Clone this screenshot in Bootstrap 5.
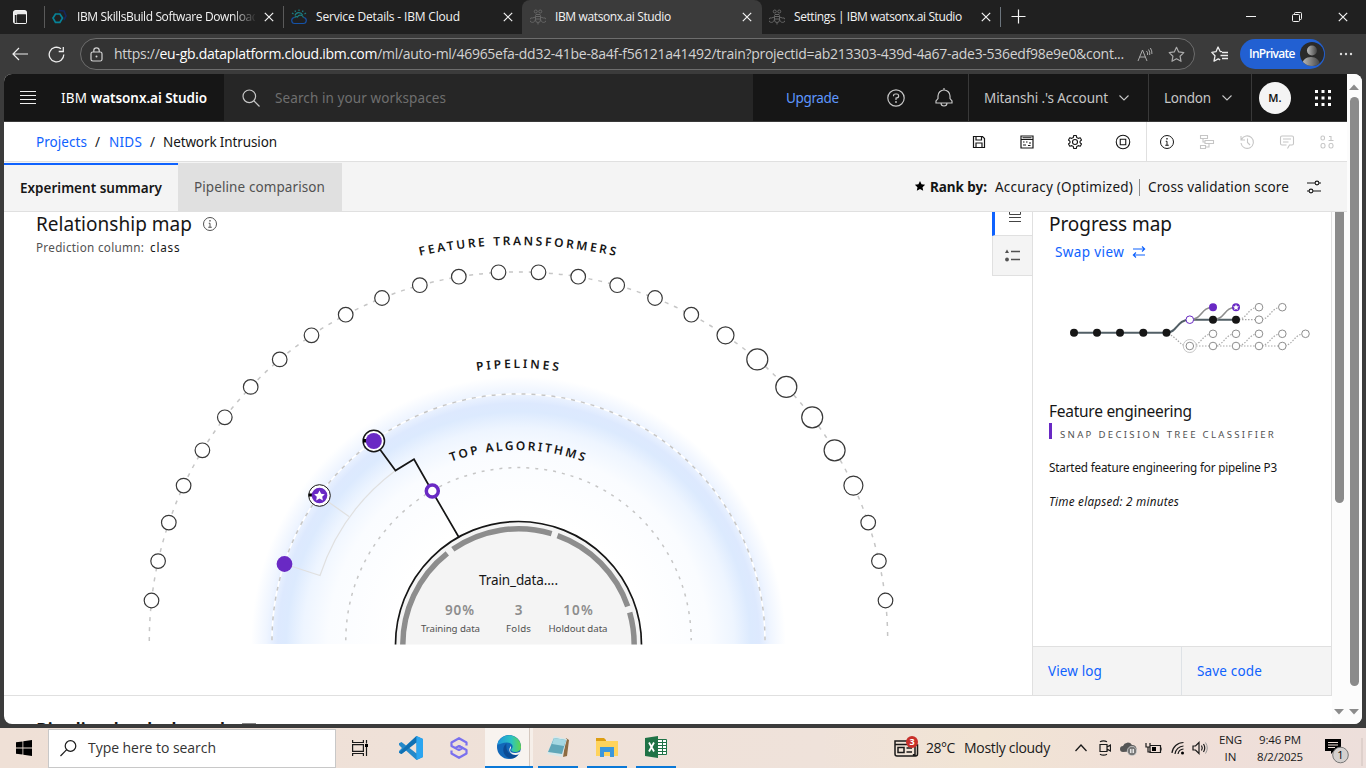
<!DOCTYPE html>
<html lang="en">
<head>
<meta charset="utf-8">
<title>IBM watsonx.ai Studio</title>
<meta name="viewport" content="width=device-width, initial-scale=1">
<link href="https://cdn.jsdelivr.net/npm/bootstrap@5.3.0/dist/css/bootstrap.min.css" rel="stylesheet">
<style>
:root{--blue:#0f62fe;--ink:#161616;--line:#e0e0e0;--soft:#f4f4f4;--purple:#6929c4}
html,body{height:100%;overflow:hidden}
body{background:#3b3b3b;font-family:"Noto Sans","Open Sans",sans-serif;font-size:13.5px;line-height:18px;color:var(--ink)}
svg{display:block;flex:none}
a{text-decoration:none;color:var(--blue)}
.fit{display:inline-block;white-space:nowrap;flex:none}
.sysui{font-family:"Open Sans","Noto Sans",sans-serif}
.colgrid{display:grid;align-items:center;justify-items:start}
.ln{fill:none}
.ln:not([stroke]){stroke:currentColor}
/* browser chrome */
.tabstrip{height:34px;background:#202020;color:#f3f3f3;font-size:12px;grid-template-columns:13px 31px 239px 239px 240px 238px 11px 235px 46px 46px 1fr}
.btab{display:flex;align-items:center;height:34px;width:100%;border-left:1px solid #5a5a5a;border-image:linear-gradient(transparent 7px,#5a5a5a 7px,#5a5a5a 27px,transparent 27px) 1;padding-left:7px}
.btab.noline{border-image:none;border-color:transparent;padding-left:6px}
.btab .ttl{width:178px;margin-left:9px;overflow:hidden;white-space:nowrap}
.btab .cls{margin-left:9px;margin-top:-1px}
.btab.current{background:#3b3b3b;border:0;padding-left:8px;border-radius:8px 8px 0 0}
.fade-end{-webkit-mask-image:linear-gradient(90deg,#000 155px,transparent 180px)}
.toolbar{height:40px;background:#3b3b3b;color:#eee;grid-template-columns:12px 36px 32px 1131px 29px 99px 1fr}
.pill{height:32px;width:1115px;border:1px solid #6d6d6d;border-radius:16px;background:#333;grid-template-columns:9px 24px 1023px 31px 1fr;font-size:14px;color:#d2d2d2}
.pill b{font-weight:400;color:#fff}
.inpriv{width:85px;height:30px;border-radius:15px;background:#2260d2;color:#fff;font-size:12px;font-weight:600;padding:0 1px 0 9px}
.frame{height:650px;margin:0 4px;border-radius:8px;overflow:hidden;background:#fff}
/* application header */
.apphead{height:48px;flex:none;background:#161616;color:#c6c6c6;border-bottom:1px solid #393939}
.srch{width:529px;background:#262626;color:#6f6f6f;padding-left:18px}
.hc{height:47px;border-left:1px solid #393939}
.avatar{width:32px;height:32px;border-radius:50%;background:#f4f4f4;color:#161616;font-size:11px;font-weight:600}
.crumbs{height:40px;flex:none;border-bottom:1px solid var(--line);grid-template-columns:32px 59px 14px 41px 13px 808px 48px 48px 48px 31px 13px 40px 40px 40px 40px 1fr}
.crumbs .off{color:#c6c6c6}
.tabsrow{height:50px;flex:none;background:var(--soft);border-bottom:1px solid var(--line);grid-template-columns:174px 164px 572px 16px 65px 144px 9px 158px 1fr;padding-top:1px}
.etab{height:48px;width:100%;padding-left:16px}
.etab.on{border-top:2px solid var(--blue);font-weight:600}
.etab.off{background:#e0e0e0;color:#525252}
/* work area */
.work{height:484px;border-bottom:1px solid var(--line)}
.mapcol{width:988px}
.mapcanvas{position:absolute;left:0;top:0}
.h20{font-size:19px;line-height:24px;font-weight:400}
.sml{font-size:11.7px;line-height:16px}
.toggles{width:40px}
.tg1{height:24px;border-left:3px solid var(--blue);border-bottom:1px solid var(--line)}
.tg2{height:40px;background:var(--soft);border:1px solid var(--line);border-top:0;border-right:0;color:#525252}
.panel{width:300px;border:1px solid var(--line);border-top:0;border-bottom:0}
.algo{border-left:3px solid var(--purple);height:16px;padding-left:8px;font-size:9.6px;line-height:23px;color:#525252}
.pbtn{height:49px;background:var(--soft);border-top:1px solid var(--line);padding-left:15px}
.sb{width:15px;height:100%;background:#fcfcfc;position:relative}
.thumb{width:9px;margin-left:3px;background:#8b8b8b}
/* taskbar */
.taskbar{height:40px;margin-top:4px;background:linear-gradient(90deg,#efe0d6,#efe2da 60%,#f1e4d4 72%,#f0dfd8 85%,#eddfdb);color:#1a1a1a;font-size:14px;grid-template-columns:16px 32px 304px 47px 49px 37px 53px 49px 49px 258px 32px 38px 111px 23px 22px 25px 26px 21px 25px 39px 65px 1fr}
.find{width:288px;height:39px;background:#fff;border:1px solid #c8c8c8;padding-left:11px}
.run{height:40px;border-bottom:2px solid #0a78d7;width:40px}
.run.act{width:48px;background:linear-gradient(90deg,#f8f3ef 44px,#d5c8bf 44px,#d5c8bf 45px,#f6efe9 45px)}
</style>
</head>
<body>
<svg width="0" height="0" class="position-absolute">
  <symbol id="x" viewBox="0 0 10 10"><path class="ln" stroke-width="1.2" d="M.8.8l8.4 8.4M9.200.8L.8 9.200"/></symbol>
  <symbol id="bee" viewBox="0 0 32 32"><g fill="none" stroke="#666" stroke-width="2"><circle cx="11.500" cy="5" r="3"/><circle cx="20.500" cy="5" r="3"/><path d="M12 11h8a5 5 0 0 1 1 4v7a5 5 0 0 1-10 0v-7a5 5 0 0 1 1-4zM11 15h10M11 20h10M16 27v4M11 16l-6 2a4 4 0 0 0-3 8c4 2 8 0 9-6M21 16l6 2a4 4 0 0 1 3 8c-4 2-8 0-9-6"/></g></symbol>
  <symbol id="chev" viewBox="0 0 10 6"><path class="ln" stroke-width="1.100" d="M.5.5L5 5 9.500.5"/></symbol>
  <symbol id="info" viewBox="0 0 32 32"><g class="ln" stroke-width="2"><circle cx="16" cy="16" r="13"/><path d="M12.500 22.500h7M13.500 14.500H16v8"/></g><circle cx="16" cy="9.500" r="1.700" fill="currentColor"/></symbol>
  <symbol id="star" viewBox="0 0 20 20"><path d="M10 1.500l2.600 5.500 6 .8-4.400 4.200 1.100 6-5.300-2.900L4.700 18l1.100-6L1.400 7.800l6-.8z"/></symbol>
</svg>

<nav class="tabstrip colgrid sysui">
  <i></i>
  <svg width="14" height="14" viewBox="0 0 14 14"><rect class="ln" x=".6" y=".6" width="12.800" height="12.800" rx="2" stroke-width="1.200"/><path fill="currentColor" d="M1 1h12v3.500H1zM1 4h3v9H1z" opacity=".95"/><path d="M4.500 4.500H13V13H4.500zM1.800 5h1.700v8H1.800z" fill="#202020"/></svg>
  <div class="btab"><svg width="16" height="16" viewBox="0 0 16 16"><path d="M7 1.500l5 .5 2 5-2 4" fill="none" stroke="#15265d" stroke-width="1.700"/><path d="M3.500 5h4.400L10.500 9l-2.600 4.400H3.500L1 9z" fill="none" stroke="#078297" stroke-width="1.700"/></svg><div class="ttl fade-end"><span class="fit" data-w="182">IBM SkillsBuild Software Download</span></div><svg class="cls" width="10" height="10"><use href="#x"/></svg></div>
  <div class="btab"><svg width="16" height="16" viewBox="0 0 32 32"><g fill="none" stroke-width="2.400"><path stroke="#1552a8" d="M8 29a6 6 0 0 1-1-12M8 29h16a6 6 0 0 0 1-12"/><path stroke="#1b7f84" d="M7 17q3-3 6-1a6.500 6.500 0 0 1 12 1M8 13a8 8 0 0 1 15-1M16 1v3M8 3l1 3M24 3l-1 3M2 8l3 2M30 8l-3 2"/></g></svg><div class="ttl"><span class="fit" data-w="144">Service Details - IBM Cloud</span></div><svg class="cls" width="10" height="10"><use href="#x"/></svg></div>
  <div class="btab current"><svg width="16" height="16"><use href="#bee"/></svg><div class="ttl"><span class="fit" data-w="116">IBM watsonx.ai Studio</span></div><svg class="cls" width="10" height="10"><use href="#x"/></svg></div>
  <div class="btab noline"><svg width="16" height="16"><use href="#bee"/></svg><div class="ttl"><span class="fit" data-w="168">Settings | IBM watsonx.ai Studio</span></div><svg class="cls" width="10" height="10"><use href="#x"/></svg></div>
  <div class="border-start border-secondary" style="height:20px"></div>
  <svg width="15" height="15" viewBox="0 0 15 15" style="margin-bottom:2px"><path class="ln" stroke-width="1.200" d="M7.500 .5v14M.5 7.500h14"/></svg>
  <svg width="10" height="10" viewBox="0 0 10 10"><path class="ln" d="M0 4.500h10"/></svg>
  <svg width="10" height="10" viewBox="0 0 10 10"><path class="ln" d="M2.500 2.500v-1a1 1 0 0 1 1-1h5a1 1 0 0 1 1 1v5a1 1 0 0 1-1 1h-1"/><rect class="ln" x=".5" y="2.500" width="7" height="7" rx="1"/></svg>
  <svg width="10" height="10"><use href="#x"/></svg>
</nav>

<div class="toolbar colgrid sysui">
  <i></i>
  <svg width="16" height="14" viewBox="0 0 16 14"><path class="ln" stroke-width="1.200" d="M16 7H1M7 1L1 7l6 6"/></svg>
  <svg width="17" height="17" viewBox="0 0 17 17"><path class="ln" stroke-width="1.300" d="M15.800 8.500A7.300 7.300 0 1 1 13 2.800M15.300 1v4.500h-4.600"/></svg>
  <div class="pill colgrid">
    <i></i>
    <svg width="13" height="15" viewBox="0 0 13 15"><rect class="ln" x="1" y="5" width="11" height="9" rx="1.800" stroke-width="1.200"/><path class="ln" stroke-width="1.200" d="M3.800 5V3.500a2.700 2.700 0 0 1 5.400 0V5"/><circle cx="6.500" cy="9.500" r="1" fill="currentColor"/></svg>
    <span class="fit" data-w="1010">https://<b>eu-gb.dataplatform.cloud.ibm.com</b>/ml/auto-ml/46965efa-dd32-41be-8a4f-f56121a41492/train?projectid=ab213303-439d-4a67-ade3-536edf98e9e0&amp;cont...</span>
    <svg width="16" height="15" viewBox="0 0 16 15"><path class="ln" stroke="#aaa" d="M1 14L5.500 3 10 14M2.500 10h6M9.500 4a4 4 0 0 1 1 4M11.500 2.500a7 7 0 0 1 1.200 5.500M13.400 1a9 9 0 0 1 1.500 6"/></svg>
    <svg width="17" height="17" viewBox="0 0 20 20" fill="none" stroke="#aaa" stroke-width="1.400" stroke-linejoin="round"><use href="#star"/></svg>
  </div>
  <svg width="18" height="17" viewBox="0 0 18 17"><path class="ln" stroke-width="1.300" stroke-linejoin="round" d="M11 5.700L9.200 5.500 7 1 5 5.700.8 6.400 4 9.800l-1 5.400 4.200-2.300 2 1M11 6.500h6M9.500 9.500H17M11 12.500h6"/></svg>
  <div class="inpriv d-flex align-items-center justify-content-between"><span class="fit" data-w="46">InPrivate</span>
    <svg width="24" height="24" viewBox="0 0 24 24"><defs><linearGradient id="g1"><stop stop-color="#bbb"/><stop offset="1" stop-color="#444"/></linearGradient><clipPath id="c1"><circle cx="12" cy="12" r="12"/></clipPath></defs><g clip-path="url(#c1)"><path fill="#2a2a2a" d="M0 0h24v24H0z"/><circle cx="12" cy="8.500" r="5" fill="url(#g1)"/><path d="M2 24c0-6 4-9 9-9s9 3 9 9z" fill="url(#g1)"/></g></svg></div>
  <svg width="14" height="4" viewBox="0 0 14 4" fill="#ddd"><circle cx="2" cy="2" r="1.200"/><circle cx="7" cy="2" r="1.200"/><circle cx="12" cy="2" r="1.200"/></svg>
</div>

<main class="frame d-flex">
<div class="d-flex flex-column" style="width:1343px">
  <header class="apphead d-flex align-items-center">
    <div class="d-flex align-items-center" style="width:220px;padding-left:16px"><svg width="16" height="13" viewBox="0 0 16 13"><path stroke="#eee" d="M0 .5h16M0 4.500h16M0 8.500h16M0 12.500h16"/></svg>
      <span class="text-white ms-4"><span class="fit" style="margin-left:1px" data-w="26">IBM</span><b class="fit fw-semibold" style="margin-left:4px" data-w="116">watsonx.ai Studio</b></span></div>
    <div class="srch hc border-0 d-flex align-items-center"><svg width="18" height="18" viewBox="0 0 18 18"><g class="ln" stroke="#c6c6c6" stroke-width="1.200"><circle cx="7.300" cy="7.300" r="6.300"/><path d="M12 12l5.500 5.500"/></g></svg><span class="fit" style="margin-left:15px" data-w="171">Search in your workspaces</span></div>
    <div class="d-flex align-items-center" style="width:215px;padding-left:33px;color:#78a9ff"><span class="fit" style="color:#5f98ff" data-w="53">Upgrade</span>
      <svg style="margin-left:48px;color:#c6c6c6" width="18" height="18" viewBox="0 0 18 18"><g class="ln" stroke-width="1.200"><circle cx="9" cy="9" r="8.200"/><path d="M6.500 7.200V6.800A1.800 1.800 0 0 1 8.300 5h1.300a1.900 1.900 0 0 1 .3 3.800L9 9v2"/></g><circle cx="9" cy="13" r=".9" fill="currentColor"/></svg>
      <svg style="margin-left:30px;color:#c6c6c6" width="18" height="19" viewBox="0 0 18 19"><path class="ln" stroke-width="1.200" d="M9 0v2M1 15v-2l2-2.500V8a6 6 0 0 1 12 0v2.500L17 13v2zM6 15a3 3 0 0 0 6 0"/></svg></div>
    <div class="hc d-flex align-items-center" style="width:180px;padding-left:15px"><span class="fit" data-w="124">Mitanshi .'s Account</span><svg width="10" height="6" style="margin-left:11px"><use href="#chev"/></svg></div>
    <div class="hc d-flex align-items-center" style="width:103px;padding-left:15px"><span class="fit" data-w="47">London</span><svg width="10" height="6" style="margin-left:11px"><use href="#chev"/></svg></div>
    <div class="hc d-flex align-items-center" style="padding-left:7px"><div class="avatar d-flex align-items-center justify-content-center">M.</div>
      <svg style="margin-left:24px" width="16" height="16" viewBox="0 0 16 16" fill="#fff"><path d="M0 0h3v3H0zM6.500 0h3v3h-3zM13 0h3v3h-3zM0 6.500h3v3H0zM6.500 6.500h3v3h-3zM13 6.500h3v3h-3zM0 13h3v3H0zM6.500 13h3v3h-3zM13 13h3v3h-3z"/></svg></div>
  </header>

  <div class="crumbs colgrid">
    <i></i><a class="fit" data-w="51">Projects</a><span>/</span><a class="fit" data-w="33">NIDS</a><span>/</span><span class="fit" data-w="114">Network Intrusion</span>
    <svg width="16" height="16" viewBox="0 0 32 32"><path class="ln" stroke-width="2.400" d="M5 5h18l4 4v18H5zM10 5v7h11V5M10 27V18h12v9"/></svg>
    <svg width="16" height="16" viewBox="0 0 32 32"><path class="ln" stroke-width="2.400" d="M4 4h24v24H4zM4 11h24M8 16h3M14 16h3M20 18h4M8 22h6M18 23h5M7 7.500h18"/></svg>
    <svg width="16" height="16" viewBox="0 0 32 32"><g class="ln" stroke-width="2.200"><circle cx="16" cy="16" r="5"/><path stroke-linejoin="round" d="M13.500 3h5l1 4 3 1.800 4-1.200 2.500 4.400-3 2.800v2.400l3 2.800-2.500 4.400-4-1.200-3 1.800-1 4h-5l-1-4-3-1.800-4 1.200L3 20l3-2.800v-2.400L3 12l2.500-4.400 4 1.200 3-1.800z"/></g></svg>
    <svg width="16" height="16" viewBox="0 0 32 32"><g class="ln" stroke-width="2.200"><circle cx="16" cy="16" r="13.500"/><path d="M10.500 10.500h11v11h-11z"/></g></svg>
    <div class="border-start h-100" style="border-color:#e0e0e0!important"></div>
    <svg width="16" height="16"><use href="#info"/></svg>
    <svg class="off" width="16" height="16" viewBox="0 0 32 32"><path class="ln" stroke-width="2.200" d="M3 3h14v6H3zM12 13h17v6H12zM3 23h10v6H3zM8 9v7h4M20 19v7h-7"/></svg>
    <svg class="off" width="16" height="16" viewBox="0 0 32 32"><path class="ln" stroke-width="2.200" d="M4 4v8h8M5 11A12.500 12.500 0 1 1 4 18M17 9v8l5 5"/></svg>
    <svg class="off" width="16" height="16" viewBox="0 0 32 32"><path class="ln" stroke-width="2.200" d="M17 29l4-7h5a3 3 0 0 0 3-3V7a3 3 0 0 0-3-3H6a3 3 0 0 0-3 3v12a3 3 0 0 0 3 3h9M8 10h16M8 16h11"/></svg>
    <svg class="off" width="16" height="16" viewBox="0 0 32 32"><g class="ln" stroke-width="2.200"><rect x="4" y="4" width="7" height="8" rx="3"/><rect x="4" y="19" width="8" height="9" rx="3.500"/><rect x="20" y="19" width="8" height="9" rx="3.500"/><path d="M20 5h4v8M19 13h10"/></g></svg>
  </div>

  <div class="tabsrow colgrid">
    <div class="etab on d-flex align-items-center"><span class="fit" data-w="142">Experiment summary</span></div>
    <div class="etab off d-flex align-items-center"><span class="fit" data-w="131">Pipeline comparison</span></div>
    <i></i>
    <svg width="12" height="12" viewBox="0 0 20 20" style="margin-bottom:2px"><use href="#star"/></svg>
    <b class="fit fw-bold" data-w="57">Rank by:</b><span class="fit" data-w="138">Accuracy (Optimized)</span>
    <div style="width:1px;height:17px;background:#8d8d8d"></div><span class="fit" data-w="141">Cross validation score</span>
    <svg width="16" height="16" viewBox="0 0 32 32"><g class="ln" stroke-width="2.200"><path d="M2 8h16M26 8h4M2 24h4M14 24h16"/><circle cx="22" cy="8" r="3.800"/><circle cx="10" cy="24" r="3.800"/></g></svg>
  </div>

  <div class="d-flex">
   <div style="width:1328px">
    <div class="work d-flex">
      <section class="mapcol position-relative">
        <svg class="mapcanvas" id="map" width="988" height="434" viewBox="4 212 988 434">
          <defs>
            <radialGradient id="glow" gradientUnits="userSpaceOnUse" cx="518.500" cy="644" r="280"><stop offset=".45" stop-color="#fff"/><stop offset=".68" stop-color="#fafcff"/><stop offset=".77" stop-color="#eef5ff"/><stop offset=".83" stop-color="#dceafe"/><stop offset=".86" stop-color="#dde9fe"/><stop offset=".9" stop-color="#eff5ff"/><stop offset=".955" stop-color="#fff"/></radialGradient>
            <path id="arcF" d="M94.500 643A423 398 0 0 1 940.500 643" fill="none"/>
            <path id="arcP" d="M246.500 643A271 275 0 0 1 788.500 643" fill="none"/>
            <path id="arcT" d="M323.500 643A194 193 0 0 1 711.500 643" fill="none"/>
            <clipPath id="cut"><path d="M4 212h988v432.500H4z"/></clipPath>
          </defs>
          <g clip-path="url(#cut)">
            <path d="M238 644a280.500 280.500 0 0 1 561 0z" fill="url(#glow)"/>
            <g fill="none" stroke="#c6c6c6" stroke-width="1.500">
              <path d="M149.300 641A369.200 369.200 0 0 1 887.700 641" stroke-dasharray="4 6"/>
              <path d="M272 640.300A246.500 246.500 0 0 1 765 640.300" stroke="#fff"/>
              <path d="M272 640.300A246.500 246.500 0 0 1 765 640.300" stroke-dasharray="4 6"/>
              <path d="M345.800 640.300A172.700 172.700 0 0 1 691.200 640.300" stroke-dasharray="3 6"/>
            </g>
            <circle cx="518.500" cy="644.500" r="123" fill="#f4f4f4" stroke="#161616" stroke-width="1.700"/>
            <g id="ring" fill="none" stroke="#8d8d8d" stroke-width="5.500"></g>
            <path d="M395.500 470.500A215 215 0 0 0 320 575.500L284.500 564M349 516.500L320 496" fill="none" stroke="#e0e0e0" stroke-width="1.200"/>
            <path d="M373.800 441L395.500 470.500 414 459.300 432 491 459 537.500" fill="none" stroke="#161616" stroke-width="1.700"/>
            <g id="dots" fill="#fff" stroke="#393939" stroke-width="1.200"></g>
            <circle cx="373.800" cy="441" r="10.700" fill="#fff" stroke="#161616" stroke-width="1.500"/><rect x="363" y="439" width="4" height="3.500"/><circle cx="373.800" cy="441" r="8" fill="#6929c4"/>
            <circle cx="319.500" cy="495.500" r="10.800" fill="#fff" stroke="#161616"/><rect x="308.500" y="493.500" width="4" height="3"/><circle cx="319.500" cy="495.500" r="7.800" fill="#6929c4"/>
            <path fill="#fff" d="M319.500 490.500l1.600 3.300 3.700.4-2.600 2.500.7 3.700-3.400-1.900-3.300 1.900.6-3.700-2.600-2.500 3.700-.4z"/>
            <circle cx="284.500" cy="564" r="7.900" fill="#6929c4"/>
            <circle cx="432.300" cy="491" r="6" fill="#fff" stroke="#6929c4" stroke-width="3.500"/>
            <g font-size="12" font-weight="600" text-anchor="middle" fill="#161616">
              <text textLength="197"><textPath href="#arcF" startOffset="50%" textLength="197">FEATURE TRANSFORMERS</textPath></text>
              <text textLength="82"><textPath href="#arcP" startOffset="50%" textLength="82">PIPELINES</textPath></text>
              <text textLength="135"><textPath href="#arcT" startOffset="50%" textLength="135">TOP ALGORITHMS</textPath></text>
            </g>
            <g text-anchor="middle">
              <text x="518.500" y="585" font-size="13.500" fill="#161616" textLength="79">Train_data....</text>
              <g font-size="13.500" font-weight="600" fill="#8d8d8d"><text x="459.500" y="615" textLength="29">90%</text><text x="518.500" y="615">3</text><text x="578" y="615" textLength="29.500">10%</text></g>
              <g font-size="9.700" fill="#525252"><text x="450.500" y="632" textLength="59">Training data</text><text x="518.500" y="632" textLength="25">Folds</text><text x="578" y="632" textLength="59">Holdout data</text></g>
            </g>
          </g>
        </svg>
        <div class="position-relative" style="padding-left:32px">
          <div class="d-flex align-items-center"><h2 class="h20 m-0 fit" data-w="156">Relationship map</h2><svg width="16" height="16" style="margin-left:10px;color:#525252"><use href="#info"/></svg></div>
          <div class="sml d-flex" style="margin-top:3px;color:#525252"><span class="fit" data-w="108">Prediction column:</span><span class="fit" style="margin-left:6px;color:#161616" data-w="30">class</span></div>
        </div>
      </section>
      <div class="toggles">
        <div class="tg1 d-flex justify-content-center"><svg width="12" height="11" viewBox="0 0 12 11" style="margin-right:-2px"><path class="ln" stroke="#444" d="M.5 0v2.500h11V0M0 5.500h12M0 9.500h12"/></svg></div>
        <div class="tg2 d-flex align-items-center justify-content-center"><svg width="15" height="13" viewBox="0 0 15 13"><path class="ln" stroke-width="1.300" d="M6 2.500h9M6 10.500h9"/><path fill="currentColor" d="M2 .5L4 4H0z"/><circle cx="2" cy="10.500" r="1.900" fill="currentColor"/></svg></div>
      </div>
      <aside class="panel d-flex flex-column">
        <div class="flex-grow-1 ps-3">
          <h2 class="h20 m-0 fit d-block" data-w="123">Progress map</h2>
          <a class="d-flex align-items-center" style="padding-left:6px;margin-top:7px"><span class="fit" data-w="69">Swap view</span><svg width="14" height="12" viewBox="0 0 14 12" style="margin-left:8px"><path class="ln" stroke-width="1.100" d="M1 3h12M10 .5L12.700 3 10 5.500M13 9H1M4 6.500L1.300 9 4 11.500"/></svg></a>
          <svg id="prog" width="270" height="80" viewBox="1049 290 270 80" style="margin-top:29px">
            <g fill="none" stroke="#525f66" stroke-width="2"><path d="M1074 332.800h92M1166.500 332.800c11 0 10-13.100 23.300-13.100h46"/></g>
            <path fill="none" stroke="#8d8d8d" stroke-width="1.600" d="M1190 319.700c12 0 11-12.500 23-12.500M1213 319.700c12 0 11-12.500 23-12.500"/>
            <path id="todo" fill="none" stroke="#a8a8a8" stroke-width="1.200" stroke-dasharray="1.500 1.500"></path>
            <g id="pn"></g>
            <path fill="#fff" d="M1236 304.200l.9 2 2.100.2-1.600 1.500.5 2.200-1.900-1.100-1.900 1.100.5-2.200-1.600-1.500 2.100-.2z"/>
          </svg>
          <div class="fit d-block" style="font-size:15.500px;line-height:22px;margin-top:30px" data-w="143">Feature engineering</div>
          <div class="algo" style="margin-top:1px"><span class="fit" data-w="215">SNAP DECISION TREE CLASSIFIER</span></div>
          <div class="sml" style="margin-top:20px"><span class="fit" data-w="228">Started feature engineering for pipeline P3</span></div>
          <div class="sml fst-italic" style="margin-top:18px"><span class="fit" data-w="130">Time elapsed: 2 minutes</span></div>
        </div>
        <div class="d-flex"><a class="pbtn d-flex align-items-center" style="width:148px"><span class="fit" data-w="54">View log</span></a><a class="pbtn border-start d-flex align-items-center flex-grow-1"><span class="fit" data-w="65">Save code</span></a></div>
      </aside>
    </div>
    <div class="d-flex align-items-center" style="padding:22px 0 0 32px"><h2 class="h20 m-0 fw-semibold fit" data-w="189">Pipeline leaderboard</h2><svg width="14" height="14" viewBox="0 0 14 14" style="margin-left:17px"><rect class="ln" x=".5" y=".5" width="13" height="13" stroke="#888"/></svg></div>
   </div>
   <div class="sb" style="height:512px"><div class="thumb" style="height:291px;border-radius:0 0 5px 5px"></div><svg width="10" height="6" viewBox="0 0 10 6" style="margin:206px 0 0 2px"><path fill="#8b8b8b" d="M0 0h10L5 5.500z"/></svg></div>
  </div>
</div>
<div class="sb"><svg width="10" height="6" viewBox="0 0 10 6" style="margin:10px 0 7px 2px"><path fill="#8b8b8b" d="M0 6h10L5 .5z"/></svg><div class="thumb rounded-pill" style="height:589px"></div><svg width="10" height="6" viewBox="0 0 10 6" style="margin:23px 0 0 2px"><path fill="#8b8b8b" d="M0 0h10L5 5.500z"/></svg></div>
</main>

<footer class="taskbar colgrid sysui">
  <i></i>
  <svg width="16" height="16" viewBox="0 0 16 16"><path d="M0 2.300L6.500 1.400v6.200H0zM7.300 1.300L16 0v7.600H7.300zM0 8.400h6.500v6.200L0 13.700zM7.300 8.400H16V16l-8.700-1.300z"/></svg>
  <div class="find d-flex align-items-center"><svg width="17" height="17" viewBox="0 0 17 17"><g class="ln" stroke-width="1.200"><circle cx="10.500" cy="6" r="5.300"/><path d="M6.700 9.700L.5 16"/></g></svg><span class="fit" style="margin-left:11px;color:#333" data-w="128">Type here to search</span></div>
  <svg width="16" height="16" viewBox="0 0 16 16"><path class="ln" stroke-width="1.200" d="M.6 0v2.500h10.800V0M.6 16v-2.500h10.800V16M.6 4.600h10.800v6.800H.6zM14.500 0v3.500M14.500 7v9"/><path d="M13 4h3v3h-3z"/></svg>
  <svg width="24" height="24" viewBox="0 0 24 24"><path fill="#2489ca" d="M17.500 0L24 3v18l-6.500 3L7 14.500 2.500 18 0 16.800V7.200L2.500 6 7 9.500z"/><path fill="#1070b3" d="M0 16.800L17.500 0v6.500L2.500 18z"/><path fill="#efe1d8" d="M17.500 6.500v11L10.500 12zM0 9l3 3-3 3z"/><path fill="#2ba5f0" d="M17.500 0L24 3v18l-6.500 3z"/></svg>
  <svg width="22" height="22" viewBox="0 0 22 22"><g fill="none" stroke="#7a70ee" stroke-width="2.200" stroke-linejoin="round"><path d="M18.500 8.500V5.500L11 1.200 3.500 5.500v3.500L11 13l3.500-2L11 9 7.500 11"/><path d="M3.500 13.500v3l7.500 4.300 7.500-4.300V13L11 9"/></g></svg>
  <div class="run act d-flex align-items-center" style="padding-left:12px"><svg width="24" height="24" viewBox="0 0 24 24"><defs><linearGradient id="e1"><stop stop-color="#1c93dc"/><stop offset=".6" stop-color="#2cc3c0"/><stop offset="1" stop-color="#62d64a"/></linearGradient></defs><circle cx="12" cy="12" r="12" fill="#1267b8"/><path fill="url(#e1)" d="M.3 9.500A12 12 0 0 1 24 12c0 3.500-3 5-6 5-4 0-4.500-2-3-3.500 2-3-1-6-5-6-4.500 0-7 2-9.700 2z"/><path fill="#0c4b94" d="M9.500 8.500c-5 3-4.500 13 4 15 4 0 7-2 8.500-5-6 3-14 .5-12.500-10z"/><path fill="#f8f3ef" d="M14 13c-3 4 2 7 9.500 3.500l-1.500 2.700C15 22 9.500 16 14 11z"/></svg></div>
  <div class="run d-flex align-items-center justify-content-center"><svg width="24" height="24" viewBox="0 0 24 24"><path fill="#8e6c42" d="M20 3l3 2-2 16-4 1z"/><path fill="#d8e8ea" d="M8 1l13 3-5 18-15-3z"/><path fill="#5fa6b8" d="M8 3l12 2-4 14-14-2z"/><path fill="#a5d8e2" d="M8 3l12 2-2 6-12-2z"/></svg></div>
  <div class="run d-flex align-items-center justify-content-center"><svg width="22" height="20" viewBox="0 0 22 20"><path fill="#dd9e12" d="M0 1h8l2 2v3H0z"/><path fill="#ffd35c" d="M0 4h22v15H0z"/><path fill="#3c97dc" d="M4 10h14v10h-4v-5H8v5H4z"/></svg></div>
  <div class="run d-flex align-items-center justify-content-center"><svg width="22" height="22" viewBox="0 0 22 22"><path fill="#fff" stroke="#1f7246" d="M12.500 3.500h9v15h-9z"/><path stroke="#1f7246" d="M13 6.500h8M13 9.500h8M13 12.500h8M13 15.500h8M17.500 4v14"/><path fill="#1f7246" d="M0 2l13-2v22L0 20z"/><path class="ln" stroke="#fff" stroke-width="1.800" d="M4 6.500l5 9M9 6.500l-5 9"/></svg></div>
  <svg width="25" height="22" viewBox="0 0 25 22" style="margin-bottom:3px"><path class="ln" stroke-width="1.500" d="M1 5h20v15H3a2 2 0 0 1-2-2zM21 9h2.500v9a2 2 0 0 1-4 0M1 8.500h18M4 11.500h6v5H4zM12.500 12H18M12.500 16H18"/><circle cx="18" cy="6" r="6" fill="#c8302a"/><text x="18" y="9.300" font-size="9" font-weight="700" fill="#fff" text-anchor="middle">3</text></svg>
  <span class="fit" data-w="29">28°C</span><span class="fit" data-w="86">Mostly cloudy</span>
  <svg width="12" height="8" viewBox="0 0 12 8"><path class="ln" stroke-width="1.300" d="M.5 7L6 1l5.500 6"/></svg>
  <svg width="13" height="16" viewBox="0 0 13 16"><path class="ln" stroke-width="1.200" d="M2 4.500h7v7H2zM9 7l3.500-2v6L9 9M2 1.800q3.500-2 7 0M2 14.200q3.500 2 7 0"/></svg>
  <svg width="18" height="15" viewBox="0 0 18 15"><path fill="#555" d="M3 11a3 3 0 0 1 0-6 5 5 0 0 1 9-1 4 4 0 0 1 4 6z"/><circle cx="12" cy="10" r="4.700" fill="#777" stroke="#ddd" stroke-width=".7"/><path stroke="#fff" stroke-width="1.200" d="M10.800 8v4M13.200 8v4"/></svg>
  <svg width="17" height="12" viewBox="0 0 17 12"><path class="ln" stroke-width="1.200" d="M5 3.500h10.500v7H5zM1 1v4h4V1M3 5v5h3M16 5.500v3"/><path d="M7 5h4v4H7z"/></svg>
  <svg width="14" height="14" viewBox="0 0 14 14"><path class="ln" d="M1 12A11.500 11.500 0 0 1 12.500 1.500M4 13a9 9 0 0 1 8.500-8M7 13a6 6 0 0 1 5.500-5" stroke-width="1.200"/><circle cx="11.500" cy="12" r="1.500"/></svg>
  <svg width="17" height="14" viewBox="0 0 17 14"><path class="ln" stroke-width="1.200" d="M1 5h2.500L7 1.500v11L3.500 9H1zM9.500 4.500q1.500 2.500 0 5M11.500 3q2.500 4 0 8"/><path class="ln" stroke="#999" d="M13.500 1.500q3.500 5.500 0 11"/></svg>
  <div class="text-center" style="font-size:11.500px;line-height:17px;width:23px;margin-left:2px"><span class="fit" data-w="23">ENG</span><span class="fit" data-w="12">IN</span></div>
  <div class="text-center" style="font-size:11.500px;line-height:17px;width:46px;margin-left:1px"><span class="fit" data-w="42">9:46 PM</span><span class="fit" data-w="46">8/2/2025</span></div>
  <svg width="38" height="28" viewBox="0 0 38 28" style="margin-top:7px;margin-left:4px"><path d="M0 1h16v12H9l-3 3v-3H0z"/><path stroke="#efe0d8" d="M3 4.500h10M3 7h10M3 9.500h7"/><circle cx="15.500" cy="17" r="7.800" fill="#d4d0ce" stroke="#777"/><text x="15.500" y="21" font-size="11" text-anchor="middle">1</text><path stroke="#cfc2bd" d="M37 0v28"/></svg>
</footer>

<script src="https://cdn.jsdelivr.net/npm/bootstrap@5.3.0/dist/js/bootstrap.bundle.min.js"></script>
<script>
document.querySelectorAll('.fit').forEach(function (el) {
  var w = +el.dataset.w, r = document.createRange();
  r.selectNodeContents(el);
  var nat = r.getBoundingClientRect().width;
  el.style.letterSpacing = ((w - nat) / (el.textContent.length - 0.5)).toFixed(3) + 'px';
  el.style.width = w + 'px';
});
// Feature transformers: 28 nodes on the outer arc, some enlarged.
var big = {5.5: 8.500, 6.5: 10.500, 7.5: 10.500, 8.5: 10.500, 9.5: 10.500, 10.5: 9.500}, s = '';
for (var k = -13.5; k <= 13.5; k++) {
  var a = k * 6.2 * Math.PI / 180;
  s += '<circle cx="' + (518.5 + 369.2 * Math.sin(a)).toFixed(1) + '" cy="' + (641 - 369.2 * Math.cos(a)).toFixed(1) + '" r="' + (big[k] || 7.3) + '"/>';
}
document.getElementById('dots').innerHTML = s;
function pt(d) { d *= Math.PI / 180; return (518.5 + 115.7 * Math.sin(d)).toFixed(1) + ' ' + (644.5 - 115.7 * Math.cos(d)).toFixed(1); }
document.getElementById('ring').innerHTML = [[-92, -38], [-34.6, 16.6], [19.7, 70.7], [73.9, 92]].map(function (p) {
  return '<path d="M' + pt(p[0]) + 'A115.7 115.7 0 0 1 ' + pt(p[1]) + '"/>';
}).join('');
// Progress map
var P = '', T = 'M1168 334c9 3 12 12 19 12M1190 346h92M1236 319.700h23';
function n(x, y, f, st, r) { P += '<circle cx="' + x + '" cy="' + y + '" r="' + (r || 4) + '" fill="' + f + '" stroke="' + (st || 'none') + '"/>'; }
[1074, 1097, 1120, 1143.300, 1166.500].forEach(function (x) { n(x, 332.8, '#161616'); });
n(1213, 319.7, '#161616'); n(1236, 319.7, '#161616');
n(1189.8, 319.7, '#fff', '#6929c4', 3.8); n(1213, 307.2, '#6929c4'); n(1236, 307.2, '#6929c4');
n(1189.8, 346, '#fff', '#c6c6c6', 6.5);
[[1259, 319.7], [1259, 307.2], [1282.3, 307.2], [1189.8, 346], [1213, 346], [1236, 346], [1259, 346], [1282.3, 346], [1213, 333.8], [1236, 333.8], [1259, 333.8], [1282.3, 333.8], [1305.5, 333.8]].forEach(function (p) { n(p[0], p[1], '#fff', '#8d8d8d', 3.8); });
[1190, 1213, 1236, 1259, 1282].forEach(function (x) { T += 'M' + x + ' 346c12 0 11-12.200 23-12.200'; });
[1236, 1259].forEach(function (x) { T += 'M' + x + ' 319.700c12 0 11-12.500 23-12.500'; });
document.getElementById('pn').innerHTML = P;
document.getElementById('todo').setAttribute('d', T);
</script>
</body>
</html>
